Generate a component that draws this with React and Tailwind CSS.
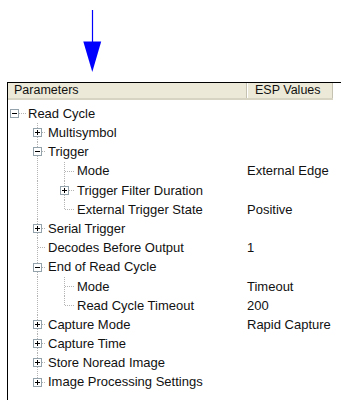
import React from "react";

const ROW_H = 19.2;
const TEXT_X = [28, 48, 77];
const CX = [14, 37, 64];
const ORIGIN = 8;

const rows = [
  { l: 0, box: "-", label: "Read Cycle" },
  { l: 1, box: "+", label: "Multisymbol" },
  { l: 1, box: "-", label: "Trigger" },
  { l: 2, label: "Mode", value: "External Edge" },
  { l: 2, box: "+", label: "Trigger Filter Duration" },
  { l: 2, label: "External Trigger State", value: "Positive", last: true },
  { l: 1, box: "+", label: "Serial Trigger" },
  { l: 1, label: "Decodes Before Output", value: "1" },
  { l: 1, box: "-", label: "End of Read Cycle" },
  { l: 2, label: "Mode", value: "Timeout" },
  { l: 2, label: "Read Cycle Timeout", value: "200", last: true },
  { l: 1, box: "+", label: "Capture Mode", value: "Rapid Capture" },
  { l: 1, box: "+", label: "Capture Time" },
  { l: 1, box: "+", label: "Store Noread Image" },
  { l: 1, box: "+", label: "Image Processing Settings", last: true },
];

const DOT = "#b4b4b4";

function Guides({ i }) {
  const r = rows[i];
  const w = TEXT_X[r.l] - ORIGIN;
  const cy = 9.5;
  const els = [];
  if (i >= 1) {
    const x = CX[1] - ORIGIN + 0.5;
    const y2 = i === 14 ? cy : ROW_H;
    els.push(<line key="v1" x1={x} y1={0} x2={x} y2={y2} stroke={DOT} strokeDasharray="1 1" />);
  }
  if ([3, 4, 5, 9, 10].includes(i)) {
    const x = CX[2] - ORIGIN + 0.5;
    const y2 = r.last ? cy : ROW_H;
    els.push(<line key="v2" x1={x} y1={0} x2={x} y2={y2} stroke={DOT} strokeDasharray="1 1" />);
  }
  const cx = CX[r.l] - ORIGIN;
  els.push(
    <line key="h" x1={cx + 0.5} y1={cy} x2={w - 2} y2={cy} stroke={DOT} strokeDasharray="1 1" />
  );
  if (r.box) {
    const bx = cx - 4;
    const by = Math.round(cy - 4.5);
    els.push(
      <g key="b">
        <rect x={bx + 0.5} y={by + 0.5} width={8} height={8} fill="#ffffff" stroke="#94a2ab" />
        <line x1={bx + 2} y1={by + 4.5} x2={bx + 7} y2={by + 4.5} stroke="#000" />
        {r.box === "+" && (
          <line x1={bx + 4.5} y1={by + 2} x2={bx + 4.5} y2={by + 7} stroke="#000" />
        )}
      </g>
    );
  }
  return (
    <svg width={w} height={ROW_H} className="shrink-0 block" shapeRendering="crispEdges">
      {els}
    </svg>
  );
}

export default function App() {
  return (
    <div className="w-[341px] h-[400px] bg-white overflow-hidden" style={{ fontFamily: '"Liberation Sans", Arial, sans-serif' }}>
      <svg width="341" height="82" className="block">
        <line x1="92.5" y1="10" x2="92.5" y2="42" stroke="#0000ff" strokeWidth="1.2" />
        <polygon points="83.3,41.5 101.2,41.5 92.3,72" fill="#0000ff" />
      </svg>
      <div className="ml-[7px] border-l border-t border-black h-[318px]">
        <div className="flex w-[325px] h-[17px] bg-[#ece9d8] border-b-2 border-b-[#d8d4c4] text-[12.5px] text-[#111] leading-none">
          <div className="w-[239px] flex items-center pl-[6px] border-r border-r-[#c5c2b2] h-[15px]">
            Parameters
          </div>
          <div className="w-[1px] bg-white h-[15px]" />
          <div className="flex-1 flex items-center pl-[7px] border-r border-r-[#c5c2b2] h-[15px]">
            ESP Values
          </div>
        </div>
        <div className="pt-[4px] text-[13px] text-[#111]">
          {rows.map((r, i) => (
            <div key={i} className="flex items-center h-[19.2px]">
              <Guides i={i} />
              <div className="whitespace-nowrap" style={{ width: 238 - (TEXT_X[r.l] - ORIGIN) }}>
                {r.label}
              </div>
              <div className="whitespace-nowrap pl-[1px]">{r.value || ""}</div>
            </div>
          ))}
        </div>
      </div>
    </div>
  );
}
